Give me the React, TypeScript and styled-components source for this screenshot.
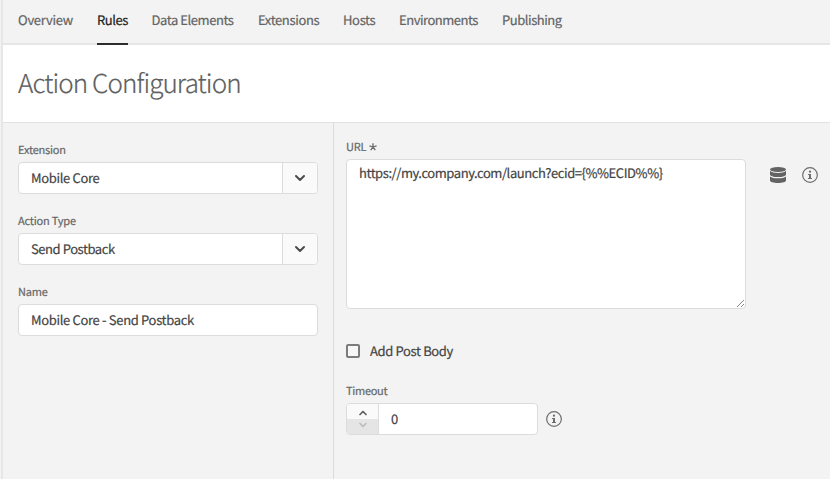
import React from "react";
import styled, { createGlobalStyle } from "styled-components";

const Global = createGlobalStyle`
  * { box-sizing: border-box; }
  body { margin: 0; background: #f3f3f3; overflow: hidden; }
  body {
    font-family: "Noto Sans CJK SC", "Open Sans", sans-serif;
    text-rendering: geometricPrecision;
    -webkit-text-stroke: 0.2px;
  }
`;

const Page = styled.div`
  height: 479px;
  display: flex;
  flex-direction: column;
  border-left: 1px solid #f3f3f3;
  background: #f3f3f3;
  color: #444;
`;

const Frame = styled.div`
  flex: 1;
  display: flex;
  flex-direction: column;
  border-left: 2px solid #e7e7e7;
`;

const Nav = styled.nav`
  height: 45px;
  display: flex;
  gap: 24px;
  padding-left: 15px;
  border-bottom: 2px solid #e6e6e6;
`;

const Tab = styled.a<{ $width: number; $tracking: number; $active?: boolean }>`
  width: ${(p) => p.$width}px;
  height: 45px;
  line-height: 39px;
  font-size: 13px;
  letter-spacing: ${(p) => p.$tracking}px;
  white-space: nowrap;
  color: ${(p) => (p.$active ? "#222" : "#636363")};
  border-bottom: 2px solid ${(p) => (p.$active ? "#2c2c2c" : "transparent")};
`;

const Header = styled.header`
  height: 78px;
  padding-left: 15px;
  background: #fff;
  border-bottom: 1px solid #e1e1e1;
`;

const Title = styled.h1`
  margin: 0;
  font-size: 26px;
  font-weight: 300;
  line-height: 76px;
  letter-spacing: -0.9px;
  color: #606060;
`;

const Body = styled.main`
  flex: 1;
  display: flex;
`;

const Sidebar = styled.section`
  width: 331px;
  padding: 19px 15px 0;
  border-right: 1px solid #dcdcdc;
`;

const Content = styled.section`
  flex: 1;
  padding: 16px 12px 0;
`;

const Field = styled.div`
  height: 71px;
`;

const Label = styled.label<{ $tracking?: number }>`
  display: flex;
  align-items: center;
  height: 20px;
  line-height: 14px;
  padding-bottom: 5px;
  font-size: 11px;
  letter-spacing: ${(p) => p.$tracking ?? -0.2}px;
  color: #666;
`;

const Box = styled.div<{ $width: number }>`
  width: ${(p) => p.$width}px;
  height: 32px;
  display: flex;
  overflow: hidden;
  border: 1px solid #dcdcdc;
  border-radius: 4px;
  background: #fff;
`;

const Value = styled.div<{ $tracking?: number }>`
  flex: 1;
  padding-left: 12px;
  line-height: 30px;
  font-size: 13px;
  letter-spacing: ${(p) => p.$tracking ?? -0.33}px;
  white-space: nowrap;
`;

const DropButton = styled.div`
  width: 35px;
  display: flex;
  align-items: center;
  justify-content: center;
  border-left: 1px solid #dcdcdc;
  background: #fafafa;
`;

const UrlRow = styled.div`
  display: flex;
`;

const TextArea = styled.div`
  position: relative;
  width: 400px;
  height: 150px;
  padding: 0 12px;
  font-size: 13px;
  line-height: 26px;
  letter-spacing: -0.43px;
  white-space: nowrap;
  border: 1px solid #dcdcdc;
  border-radius: 4px;
  background: #fff;
`;

const Grip = styled.svg`
  position: absolute;
  right: 0;
  bottom: 0;
`;

const Actions = styled.div`
  display: flex;
  gap: 16px;
  height: 16px;
  margin: 8px 0 0 24px;
`;

const CheckRow = styled.div`
  display: flex;
  align-items: center;
  gap: 10px;
  height: 20px;
  margin-top: 32px;
  font-size: 13px;
  line-height: 20px;
  letter-spacing: -0.35px;
`;

const CheckBox = styled.span`
  width: 14px;
  height: 14px;
  border: 2px solid #7c7c7c;
  border-radius: 2px;
  background: #f7f7f7;
`;

const TimeoutField = styled.div`
  margin-top: 22px;
`;

const TimeoutRow = styled.div`
  display: flex;
  align-items: center;
  gap: 8px;
`;

const Stepper = styled.div`
  width: 32px;
  display: flex;
  flex-direction: column;
  border-right: 1px solid #dcdcdc;
`;

const Step = styled.div<{ $disabled?: boolean }>`
  height: 15px;
  display: flex;
  align-items: center;
  justify-content: center;
  padding-${(p) => (p.$disabled ? "bottom" : "top")}: 3px;
  background: ${(p) => (p.$disabled ? "#e5e5e5" : "#fafafa")};
  color: ${(p) => (p.$disabled ? "#bdbdbd" : "#5f5f5f")};
`;

const tabs = [
  { name: "Overview", width: 55, tracking: -0.25 },
  { name: "Rules", width: 30.5, tracking: -0.45, active: true },
  { name: "Data Elements", width: 82.5, tracking: -0.42 },
  { name: "Extensions", width: 61, tracking: -0.35 },
  { name: "Hosts", width: 32, tracking: -0.35 },
  { name: "Environments", width: 79, tracking: -0.48 },
  { name: "Publishing", width: 60, tracking: -0.45 },
];

const Chevron = () => (
  <svg width="12" height="8" viewBox="0 0 12 8" fill="none" stroke="#4b4b4b" strokeWidth="2" strokeLinecap="round" strokeLinejoin="round">
    <path d="M2 2l4 4 4-4" />
  </svg>
);

const SmallChevron = ({ up }: { up?: boolean }) => (
  <svg width="10" height="6" viewBox="0 0 10 6" fill="none" stroke="currentColor" strokeWidth="1.7" strokeLinecap="round" strokeLinejoin="round">
    <path d={up ? "M2 4.5l3-3 3 3" : "M2 1.5l3 3 3-3"} />
  </svg>
);

const Info = () => (
  <svg width="16" height="16" viewBox="0 0 16 16">
    <circle cx="8" cy="8" r="7.35" fill="none" stroke="#6e6e6e" strokeWidth="1.2" />
    <circle cx="8" cy="4.7" r="1.15" fill="#6e6e6e" />
    <path d="M6 7h3v4h1v1H6v-1h1V8H6z" fill="#6e6e6e" />
  </svg>
);

const Database = () => (
  <svg width="16" height="16" viewBox="0 0 16 16" fill="#636363">
    <ellipse cx="8" cy="2.5" rx="8" ry="2.5" />
    <path d="M0 4c1.4 1.2 4.5 1.9 8 1.9S14.600 5.200 16 4v3.400C16 8.800 12.500 10 8 10S0 8.800 0 7.400z" />
    <path d="M0 9.400c1.400 1.200 4.500 1.900 8 1.900s6.600-.7 8-1.900v4.100C16 14.900 12.500 16 8 16s-8-1.100-8-2.500z" />
  </svg>
);

const Asterisk = () => (
  <svg width="8" height="8" viewBox="0 0 8 8" stroke="#6b6b6b" strokeWidth="1.3">
    <path d="M4 4V.3M4 4L.4 2.900M4 4l3.600-1.100M4 4L1.700 7.200M4 4l2.300 3.200" />
  </svg>
);

const RequiredLabel = styled(Label)`
  gap: 3px;
`;

export default function App() {
  return (
    <>
      <Global />
      <Page>
        <Frame>
          <Nav>
            {tabs.map((t) => (
              <Tab key={t.name} $width={t.width} $tracking={t.tracking} $active={t.active}>
                {t.name}
              </Tab>
            ))}
          </Nav>
          <Header>
            <Title>Action Configuration</Title>
          </Header>
          <Body>
            <Sidebar>
              <Field>
                <Label>Extension</Label>
                <Box $width={300}>
                  <Value>Mobile Core</Value>
                  <DropButton><Chevron /></DropButton>
                </Box>
              </Field>
              <Field>
                <Label>Action Type</Label>
                <Box $width={300}>
                  <Value $tracking={-0.43}>Send Postback</Value>
                  <DropButton><Chevron /></DropButton>
                </Box>
              </Field>
              <Field>
                <Label>Name</Label>
                <Box $width={300}>
                  <Value>Mobile Core - Send Postback</Value>
                </Box>
              </Field>
            </Sidebar>
            <Content>
              <RequiredLabel>URL <Asterisk /></RequiredLabel>
              <UrlRow>
                <TextArea>
                  {"https://my.company.com/launch?ecid={%%ECID%%}"}
                  <Grip width="9" height="9" viewBox="0 0 9 9" stroke="#555" strokeWidth="1" strokeDasharray="1 .4">
                    <path d="M1 8L8 1M5 8l3-3" />
                  </Grip>
                </TextArea>
                <Actions>
                  <Database />
                  <Info />
                </Actions>
              </UrlRow>
              <CheckRow><CheckBox />Add Post Body</CheckRow>
              <TimeoutField>
                <Label $tracking={-0.3}>Timeout</Label>
                <TimeoutRow>
                  <Box $width={192}>
                    <Stepper>
                      <Step><SmallChevron up /></Step>
                      <Step $disabled><SmallChevron /></Step>
                    </Stepper>
                    <Value>0</Value>
                  </Box>
                  <Info />
                </TimeoutRow>
              </TimeoutField>
            </Content>
          </Body>
        </Frame>
      </Page>
    </>
  );
}
